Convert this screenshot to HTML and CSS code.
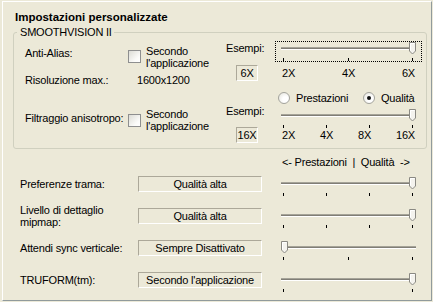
FILE: index.html
```html
<!DOCTYPE html>
<html>

	<head>
		<meta charset="UTF-8">
		<title>Impostazioni personalizzate</title>
		<link rel="stylesheet" href="styles.css">
	</head>

	<body>
		<div id="page">
			<div class="title">Impostazioni personalizzate</div>

			<fieldset class="group">
				<legend>SMOOTHVISION II</legend>

				<!-- anti-alias -->
				<div class="aa">
					<span class="aa-lbl">Anti-Alias:</span>
					<span class="check aa-check"></span>
					<span class="app aa-app">Secondo<br>l'applicazione</span>
					<div class="samples aa-samples">
						<div>Esempi:</div>
						<div class="box small">6X</div>
					</div>
					<div class="aa-slider">
						<div class="slider focus">
							<div class="track"></div>
							<div class="ticks"><i></i><i></i><i></i></div>
							<svg class="thumb max" width="7" height="13" viewBox="0 0 7 13"><path d="M0.5 0.5h6v8.5l-3 3-3-3z" fill="#f4f3ee" stroke="#8a8983"/><path d="M1.5 8.5v-7h4" fill="none" stroke="#fff"/></svg>
						</div>
						<div class="marks"><span>2X</span><span>4X</span><span>6X</span></div>
					</div>
					<span class="res-lbl">Risoluzione max.:</span>
					<span class="res-val">1600x1200</span>
				</div>

				<!-- anisotropic filtering -->
				<div class="aniso">
					<div class="radios">
						<label class="radio"><span class="dot"></span>Prestazioni</label>
						<label class="radio on"><span class="dot"></span>Qualità</label>
					</div>
					<span class="an-lbl">Filtraggio anisotropo:</span>
					<span class="check an-check"></span>
					<span class="app an-app">Secondo<br>l'applicazione</span>
					<div class="samples an-samples">
						<div>Esempi:</div>
						<div class="box small">16X</div>
					</div>
					<div class="an-slider">
						<div class="slider">
							<div class="track"></div>
							<div class="ticks"><i></i><i></i><i></i><i></i></div>
							<svg class="thumb max" width="7" height="13" viewBox="0 0 7 13"><path d="M0.5 0.5h6v8.5l-3 3-3-3z" fill="#f4f3ee" stroke="#8a8983"/><path d="M1.5 8.5v-7h4" fill="none" stroke="#fff"/></svg>
						</div>
						<div class="marks"><span>2X</span><span>4X</span><span>8X</span><span>16X</span></div>
					</div>
				</div>
			</fieldset>

			<div class="rows head"><span class="caption">&lt;- Prestazioni&nbsp; |&nbsp; Qualità&nbsp; -&gt;</span></div>

			<div class="rows main">
				<span class="lbl">Preferenze trama:</span>
				<div class="box wide">Qualità alta</div>
				<div class="slider">
					<div class="track"></div>
					<div class="ticks"><i></i><i></i><i></i><i></i></div>
					<svg class="thumb max" width="7" height="13" viewBox="0 0 7 13"><path d="M0.5 0.5h6v8.5l-3 3-3-3z" fill="#f4f3ee" stroke="#8a8983"/><path d="M1.5 8.5v-7h4" fill="none" stroke="#fff"/></svg>
				</div>

				<span class="lbl">Livello di dettaglio<br>mipmap:</span>
				<div class="box wide">Qualità alta</div>
				<div class="slider">
					<div class="track"></div>
					<div class="ticks"><i></i><i></i><i></i><i></i></div>
					<svg class="thumb max" width="7" height="13" viewBox="0 0 7 13"><path d="M0.5 0.5h6v8.5l-3 3-3-3z" fill="#f4f3ee" stroke="#8a8983"/><path d="M1.5 8.5v-7h4" fill="none" stroke="#fff"/></svg>
				</div>

				<span class="lbl">Attendi sync verticale:</span>
				<div class="box wide">Sempre Disattivato</div>
				<div class="slider">
					<div class="track"></div>
					<div class="ticks"><i></i><i></i><i></i></div>
					<svg class="thumb min" width="7" height="13" viewBox="0 0 7 13"><path d="M0.5 0.5h6v8.5l-3 3-3-3z" fill="#f4f3ee" stroke="#8a8983"/><path d="M1.5 8.5v-7h4" fill="none" stroke="#fff"/></svg>
				</div>

				<span class="lbl">TRUFORM(tm):</span>
				<div class="box wide">Secondo l'applicazione</div>
				<div class="slider">
					<div class="track"></div>
					<div class="ticks"><i></i><i></i></div>
					<svg class="thumb max" width="7" height="13" viewBox="0 0 7 13"><path d="M0.5 0.5h6v8.5l-3 3-3-3z" fill="#f4f3ee" stroke="#8a8983"/><path d="M1.5 8.5v-7h4" fill="none" stroke="#fff"/></svg>
				</div>
			</div>
		</div>
	</body>

</html>
```

FILE: styles.css
```css
html,
body {
	margin: 0;
	padding: 0;
}

body {
	background: #ece9d8;
	color: #000;
	font: 11px/13px "Liberation Sans", Arial, sans-serif;
	letter-spacing: -0.2px;
}

#page {
	margin: 1px 0 0 2px;
	width: 430px;
	height: 300px;
	box-sizing: border-box;
	border: 1px solid;
	border-color: #fff #919b9c #919b9c #fff;
}

.title {
	margin-top: 8px;
	padding-left: 12px;
	font-weight: bold;
	font-size: 11.5px;
	line-height: 14px;
	letter-spacing: 0;
}

/* group box */
.group {
	margin: 2px 0 0 10px;
	width: 414px;
	box-sizing: border-box;
	border: 1px solid #d0d0bf;
	border-radius: 3px;
	padding: 2px 4px 5px 11px;
	min-inline-size: 0;
}

.group legend {
	margin-left: -8px;
	padding: 0 2px 0 3px;
	line-height: 13px;
}

.aa,
.aniso {
	display: grid;
	grid-template-columns: 103px 18px 80px 49px 147px;
}

.aa {
	grid-template-rows: 31px 18px;
}

.aniso {
	grid-template-rows: 14px auto;
}

.aa-lbl {
	grid-area: 1 / 1;
	margin-top: 6px;
}

.aa-check {
	grid-area: 1 / 2;
	margin-top: 9px;
}

.aa-app {
	grid-area: 1 / 3;
	margin-top: 4px;
}

.aa-samples {
	grid-area: 1 / 4 / 3 / 5;
	margin-top: 1px;
}

.aa-samples .box {
	margin-top: 10px;
}

.aa-slider {
	grid-area: 1 / 5 / 3 / 6;
}

.aa-slider .marks {
	margin-top: 5px;
}

.res-lbl {
	grid-area: 2 / 1;
	margin-top: 2px;
}

.res-val {
	grid-area: 2 / 2 / 3 / 4;
	margin-top: 2px;
	padding-left: 9px;
}

.radios {
	grid-area: 1 / 5;
	display: flex;
	margin-top: 2px;
	padding-left: 3px;
}

.an-lbl {
	grid-area: 2 / 1;
	margin-top: 8px;
	white-space: nowrap;
}

.an-check {
	grid-area: 2 / 2;
	margin-top: 10px;
}

.an-app {
	grid-area: 2 / 3;
	margin-top: 4px;
}

.an-samples {
	grid-area: 2 / 4;
	margin-top: 1px;
}

.an-samples .box {
	margin-top: 9px;
}

.an-slider {
	grid-area: 2 / 5;
	margin-top: 4px;
}

.app {
	line-height: 12px;
}

/* checkbox + radio */
.check {
	display: block;
	width: 13px;
	height: 13px;
	box-sizing: border-box;
	border: 1px solid #8e8f8f;
	background: linear-gradient(135deg, #dcdcd5, #fbfbf9 70%, #fff);
}

.radio {
	display: flex;
	align-items: center;
	gap: 6px;
}

.radio:first-child {
	width: 85px;
}

.dot {
	position: relative;
	width: 12px;
	height: 12px;
	box-sizing: border-box;
	border: 1px solid #a3a39c;
	border-radius: 50%;
	background: radial-gradient(circle at 65% 65%, #fff 30%, #e3e2da 100%);
}

.radio.on .dot:after {
	content: "";
	position: absolute;
	left: 3px;
	top: 3px;
	width: 4px;
	height: 4px;
	border-radius: 50%;
	background: #111;
}

/* sunken value boxes */
.box {
	height: 16px;
	box-sizing: border-box;
	border: 1px solid;
	border-color: #aca899 #fff #fff #aca899;
	text-align: center;
	line-height: 14px;
	white-space: nowrap;
}

.box.small {
	width: 22px;
	margin-left: 10px;
}

/* trackbar */
.slider {
	position: relative;
	width: 145px;
	height: 19px;
	border: 1px solid transparent;
}

.slider.focus {
	border: 1px dotted #000;
}

.track {
	margin: 5px 0 0 5px;
	width: 135px;
	height: 1px;
	border-top: 1px solid #a5a398;
	border-bottom: 1px solid #fff;
	background: #807e76;
}

.ticks {
	display: flex;
	justify-content: space-between;
	margin: 8px 0 0 7px;
	width: 130px;
	height: 3px;
}

.ticks i {
	width: 1px;
	background: #000;
}

.thumb {
	position: absolute;
	top: 0;
	display: block;
}

.thumb.max {
	left: 133px;
}

.thumb.min {
	left: 5px;
}

.marks {
	display: flex;
	justify-content: space-between;
	margin-left: 7px;
	width: 133px;
}

/* lower settings */
.rows {
	display: grid;
	grid-template-columns: 118px 124px 13px 147px;
	padding-left: 17px;
}

.head {
	margin-top: 7px;
	height: 13px;
}

.caption {
	grid-column: 4;
	padding-left: 7px;
	white-space: nowrap;
}

.main {
	margin-top: 7px;
	grid-auto-rows: 16px;
	row-gap: 16px;
	align-items: center;
}

.main .lbl {
	line-height: 12px;
}

.main .slider {
	grid-column: 4;
	align-self: start;
}
```
